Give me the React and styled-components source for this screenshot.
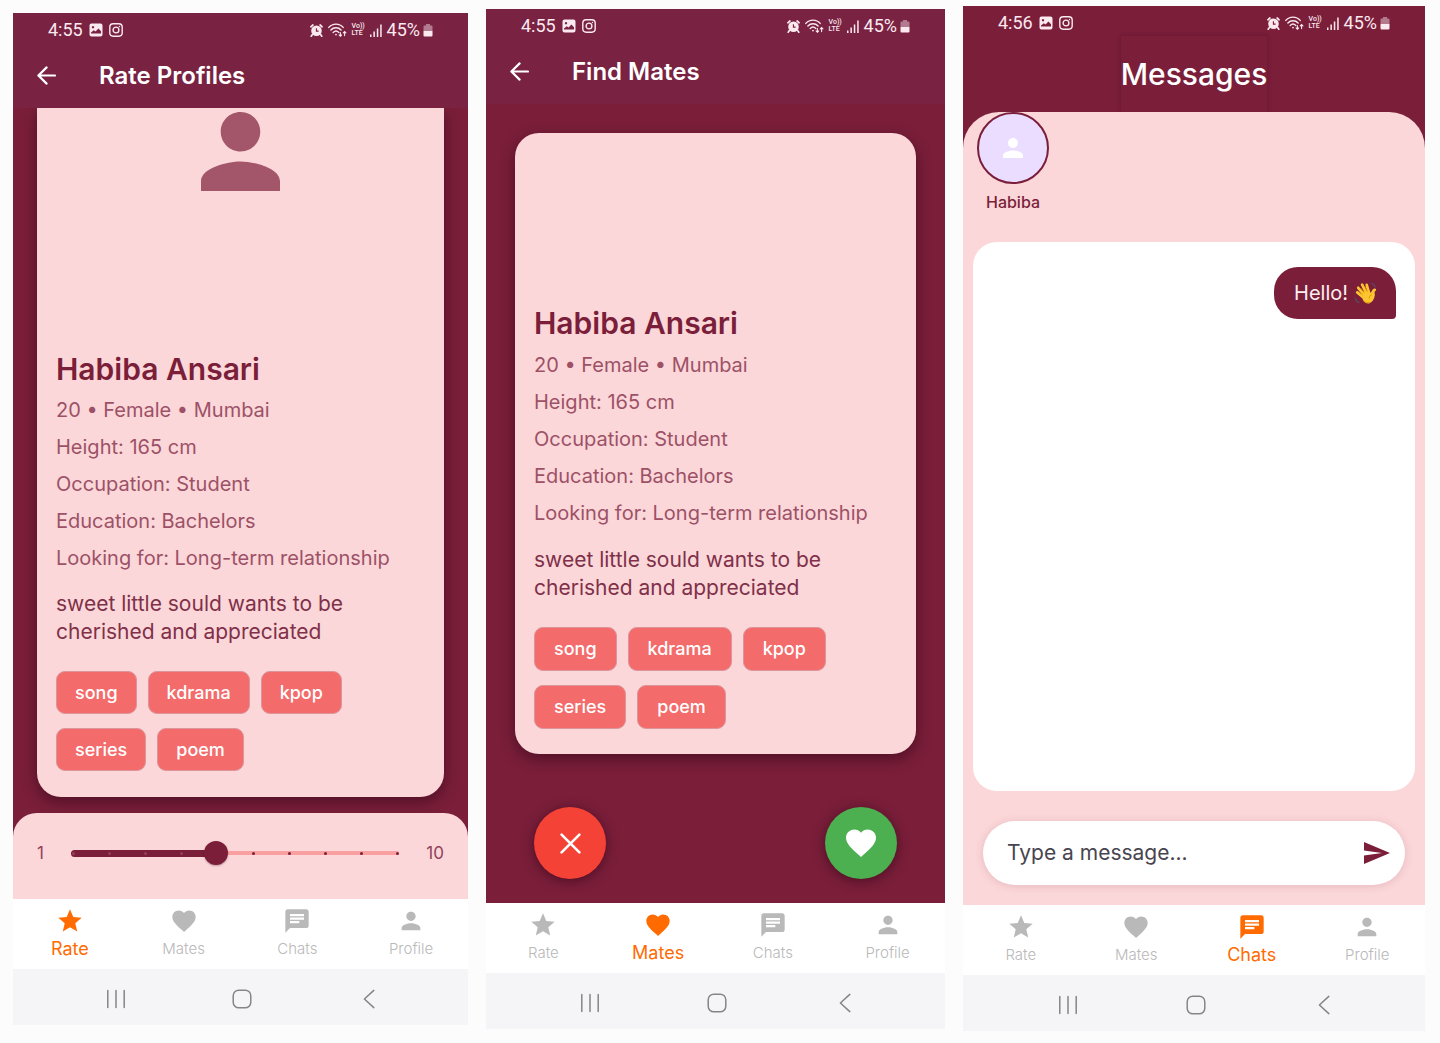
import React, { useState } from "react";
import styled, { createGlobalStyle, css } from "styled-components";

const c = {
  page: "#fcfcfc",
  maroon: "#7a1e3a",
  header: "#792242",
  pink: "#fbd7d9",
  chip: "#f36b6b",
  orange: "#ff6b00",
  grey: "#b9b9b9",
};

const GlobalStyle = createGlobalStyle`
  *, *::before, *::after { box-sizing: border-box; }
  body {
    margin: 0;
    background: ${c.page};
    font-family: Inter, "Noto Sans", sans-serif;
  }
  button, input { font: inherit; }
  button { border: 0; padding: 0; background: none; cursor: pointer; }
  h1, h2, p, ul, dl { margin: 0; padding: 0; }
`;

const Board = styled.main`
  display: grid;
  grid-template-columns: 455fr 459fr 462fr;
  gap: 18px;
  align-items: start;
  padding: 6px 15px 0 13px;
`;

const Phone = styled.section`
  display: flex;
  flex-direction: column;
  min-width: 0;
  margin-top: ${(p) => p.$drop || 0}px;
  background: ${c.maroon};
`;

/* Status bar */

const StatusRow = styled.div`
  display: flex;
  align-items: center;
  justify-content: space-between;
  height: 30px;
  padding: 4px 35px 0;
  color: #fbe9f0;
  font-family: Roboto, sans-serif;
  font-size: 18px;
  line-height: 26px;
`;

const StatusGroup = styled.div`
  display: flex;
  align-items: center;
  gap: ${(p) => (p.$tight ? 5 : 6)}px;
`;

const VoLte = styled.span`
  display: grid;
  width: 13px;
  font-size: 7px;
  font-weight: 500;
  line-height: 7px;
`;

const Charge = styled.span`
  display: flex;
  align-items: center;
  gap: 3px;
`;

function StatusBar({ time }) {
  return (
    <StatusRow>
      <StatusGroup>
        <span>{time}</span>
        <svg width="14" height="14" viewBox="0 0 14 14" aria-hidden="true">
          <path
            fill="currentColor"
            fillRule="evenodd"
            d="M2.5 0.5h9a2 2 0 0 1 2 2v9a2 2 0 0 1-2 2h-9a2 2 0 0 1-2-2v-9a2 2 0 0 1 2-2zM2 10.5h10V8.2L9.4 5.6 6.6 8.6 4.8 7.2 2 9.4zM4 3a1.2 1.2 0 1 0 0.01 0z"
          />
        </svg>
        <svg width="14" height="14" viewBox="0 0 14 14" fill="none" stroke="currentColor" strokeWidth="1.4" aria-hidden="true">
          <rect x="0.8" y="0.8" width="12.4" height="12.4" rx="3.4" />
          <circle cx="7" cy="7" r="2.9" />
          <circle cx="10.5" cy="3.5" r="0.7" fill="currentColor" stroke="none" />
        </svg>
      </StatusGroup>
      <StatusGroup $tight>
        <svg width="13" height="13" viewBox="0 0 13 13" fill="none" aria-hidden="true">
          <circle cx="6.5" cy="6.7" r="5.3" fill="currentColor" />
          <path d="M0.9 2.8L2.9 1M12.1 2.8L10.1 1M2.4 10.6L1.2 12.2M10.6 10.6l1.2 1.6" stroke="currentColor" strokeWidth="1.7" strokeLinecap="round" />
          <path d="M6.4 4.2v2.9h2.2" stroke={c.maroon} strokeWidth="1.1" />
        </svg>
        <svg width="19" height="14" viewBox="0 0 19 14" fill="none" stroke="currentColor" strokeWidth="1.4" strokeLinecap="round" aria-hidden="true">
          <path d="M0.8 4.4C4.6 0 11.4 0 15.2 4.4M2.9 7C5.6 4 10.4 4 13.1 7M5.2 9.4C6.8 7.8 9.2 7.8 10.8 9.4" />
          <circle cx="8" cy="11.6" r="0.9" fill="currentColor" stroke="none" />
          <path d="M12.4 9.6v3.4M11.2 12l1.2 1.2 1.2-1.2M16.6 12.6V8.6M15.3 9.9l1.3-1.4 1.3 1.4" strokeWidth="1.1" />
        </svg>
        <VoLte>
          <span>Vo))</span>
          <span>LTE</span>
        </VoLte>
        <svg width="12" height="13" viewBox="0 0 12 13" fill="currentColor" aria-hidden="true">
          <path d="M0 10.5h1.5V13H0zM3.4 7.5h1.5V13H3.4zM6.8 4.5h1.5V13H6.8zM10.2 0.5h1.5V13h-1.5z" />
        </svg>
        <Charge>
          <span>45%</span>
          <svg width="10" height="13" viewBox="0 0 10 13" fill="currentColor" aria-hidden="true">
            <path opacity="0.45" d="M3 0h4v1.4h1.4A1 1 0 0 1 9.5 2.5V7h-9V2.5a1 1 0 0 1 1.1-1.1H3z" />
            <path d="M0.5 7h9v4.4a1.1 1.1 0 0 1-1.1 1.1H1.6a1.1 1.1 0 0 1-1.1-1.1z" />
          </svg>
        </Charge>
      </StatusGroup>
    </StatusRow>
  );
}

/* App header */

const Header = styled.header`
  background: ${c.header};
`;

const AppBar = styled.div`
  display: flex;
  align-items: center;
  gap: 43px;
  height: 65px;
  padding: 0 24px;
`;

const BackButton = styled.button`
  display: flex;
  color: #fff;
`;

const Title = styled.h1`
  color: #fff;
  font-size: 24px;
  font-weight: 600;
  line-height: 32px;
`;

function TopBar({ time, title }) {
  return (
    <Header>
      <StatusBar time={time} />
      <AppBar>
        <BackButton aria-label="Back">
          <svg width="19" height="19" viewBox="0 0 19 19" fill="none" stroke="currentColor" strokeWidth="2.2" strokeLinecap="round" strokeLinejoin="round">
            <path d="M18 9.5H1.6M9.6 1.4L1.4 9.5l8.2 8.1" />
          </svg>
        </BackButton>
        <Title>{title}</Title>
      </AppBar>
    </Header>
  );
}

/* Profile card */

const Card = styled.article`
  padding: 0 19px ${(p) => (p.$roomy ? 25 : 26)}px;
  background: ${c.pink};
  border-radius: ${(p) => (p.$scrolled ? "0 0 24px 24px" : "24px")};
  box-shadow: 0 5px 14px rgba(40, 4, 18, 0.5);
`;

const Hero = styled.div`
  display: flex;
  justify-content: center;
  height: ${(p) => p.$height}px;
  padding-top: 4px;
`;

const Name = styled.h2`
  color: ${c.maroon};
  font-size: 30px;
  font-weight: 600;
  line-height: 42px;
`;

const Facts = styled.div`
  padding: ${(p) => (p.$roomy ? "3px 0 14px" : "2px 0 13px")};
`;

const Fact = styled.p`
  color: #9d5167;
  font-size: 20px;
  line-height: 37px;
  white-space: nowrap;
`;

const Bio = styled.p`
  max-width: 310px;
  color: #803049;
  font-size: 21px;
  line-height: 28px;
`;

const Chips = styled.ul`
  display: flex;
  flex-wrap: wrap;
  gap: 14px 11px;
  max-width: 320px;
  padding-top: 25px;
  list-style: none;
`;

const Chip = styled.li`
  padding: 0 ${(p) => (p.$roomy ? 19 : 18)}px;
  border: 1px solid #dc959b;
  border-radius: 9px;
  background: ${c.chip};
  color: #fff;
  font-size: 18px;
  font-weight: 500;
  line-height: ${(p) => (p.$roomy ? 42 : 41)}px;
`;

const facts = [
  "20 • Female • Mumbai",
  "Height: 165 cm",
  "Occupation: Student",
  "Education: Bachelors",
  "Looking for: Long-term relationship",
];
const interests = ["song", "kdrama", "kpop", "series", "poem"];

function Profile({ scrolled, roomy, heroHeight, children }) {
  return (
    <Card $scrolled={scrolled} $roomy={roomy}>
      <Hero $height={heroHeight}>{children}</Hero>
      <Name>Habiba Ansari</Name>
      <Facts $roomy={roomy}>
        {facts.map((f) => (
          <Fact key={f}>{f}</Fact>
        ))}
      </Facts>
      <Bio>sweet little sould wants to be cherished and appreciated</Bio>
      <Chips>
        {interests.map((i) => (
          <Chip key={i} $roomy={roomy}>
            {i}
          </Chip>
        ))}
      </Chips>
    </Card>
  );
}

/* Rating slider */

const RateBody = styled.div`
  overflow: hidden;
  padding: 0 24px 16px;
`;

const RatePanel = styled.div`
  display: grid;
  grid-template-columns: 18px 1fr 29px;
  align-items: center;
  height: 86px;
  padding: 0 24px 6px;
  border-radius: 24px 24px 0 0;
  background: ${c.pink};
  color: #93405a;
  font-size: 17px;
  line-height: 24px;
`;

const MaxLabel = styled.span`
  text-align: right;
`;

const Slider = styled.div`
  display: grid;
  align-items: center;

  > * {
    grid-area: 1 / 1;
  }
`;

const Rail = styled.span`
  height: 4px;
  margin: 0 16px;
  border-radius: 2px;
  background: #f99f9f;
`;

const Fill = styled.span`
  height: 7px;
  margin-left: 16px;
  border-radius: 4px;
  background: ${c.maroon};
`;

const Ticks = styled.span`
  display: flex;
`;

const Tick = styled.span`
  display: flex;
  flex: 1;
  justify-content: center;

  &::before {
    content: "";
    width: 3px;
    height: 3px;
    border-radius: 50%;
    background: ${(p) => (p.$passed ? "#95405a" : c.maroon)};
  }
`;

const Range = styled.input`
  appearance: none;
  width: 100%;
  height: 24px;
  margin: 0;
  background: transparent;

  &::-webkit-slider-thumb {
    appearance: none;
    width: 24px;
    height: 24px;
    border-radius: 50%;
    background: ${c.maroon};
    box-shadow: 0 1px 2px rgba(60, 10, 30, 0.3);
  }
`;

function Rating() {
  const [value, setValue] = useState(5);
  return (
    <RatePanel>
      <span>1</span>
      <Slider>
        <Rail />
        <Fill style={{ width: `${((value - 1) / 9) * 90}%` }} />
        <Ticks>
          {Array.from({ length: 10 }, (_, i) => (
            <Tick key={i} $passed={i < value} />
          ))}
        </Ticks>
        <Range
          type="range"
          min="1"
          max="10"
          value={value}
          aria-label="Rating"
          onChange={(e) => setValue(Number(e.target.value))}
        />
      </Slider>
      <MaxLabel>10</MaxLabel>
    </RatePanel>
  );
}

/* Mates */

const MatesBody = styled.div`
  padding: 29px 29px 24px;
`;

const Actions = styled.div`
  display: flex;
  justify-content: space-between;
  padding: 53px 19px 0;
`;

const RoundButton = styled.button`
  display: flex;
  align-items: center;
  justify-content: center;
  width: 72px;
  height: 72px;
  border-radius: 50%;
  background: ${(p) => p.$color};
  color: #fff;
  box-shadow: 0 2px 12px rgba(40, 4, 18, 0.55);
`;

/* Messages */

const MessagesHead = styled.header`
  display: flex;
  justify-content: center;
`;

const MessagesTitle = styled.h1`
  color: #fff;
  font-size: 30px;
  font-weight: 500;
  line-height: 76px;
  box-shadow: 0 0 4px rgba(60, 8, 26, 0.35);
`;

const ChatBody = styled.div`
  position: relative;
  padding: 0 10px 20px;
  border-radius: 36px 36px 0 0;
  background: ${c.pink};
`;

const Contacts = styled.div`
  display: flex;
  height: 130px;
  padding-left: 4px;
`;

const Contact = styled.button`
  display: flex;
  flex-direction: column;
  align-items: center;
  gap: 6px;
  width: 72px;
  height: 102px;
  color: ${c.maroon};
  font-size: 16px;
  font-weight: 500;
  line-height: 24px;
`;

const Avatar = styled.span`
  display: flex;
  align-items: center;
  justify-content: center;
  width: 72px;
  height: 72px;
  border: 2px solid ${c.maroon};
  border-radius: 50%;
  background: #eaddff;
  color: #fff;
`;

const Thread = styled.div`
  display: flex;
  justify-content: flex-end;
  align-items: flex-start;
  height: 549px;
  padding: 25px 19px;
  border-radius: 24px;
  background: #fff;
`;

const Bubble = styled.p`
  display: flex;
  align-items: center;
  gap: 6px;
  height: 52px;
  padding: 0 18px 0 20px;
  border-radius: 24px 24px 4px 24px;
  background: ${c.maroon};
  color: #fdeef2;
  font-size: 20px;
`;

const Composer = styled.form`
  display: flex;
  align-items: center;
  height: 64px;
  margin: 30px 10px 0;
  padding: 0 15px 0 24px;
  border-radius: 32px;
  background: #fff;
  box-shadow: 0 1px 8px rgba(120, 30, 58, 0.16);
`;

const MessageInput = styled.input`
  flex: 1;
  min-width: 0;
  padding: 0;
  border: 0;
  outline: 0;
  background: transparent;
  color: #49454f;
  font-size: 21px;
  line-height: 28px;

  &::placeholder {
    color: #49454f;
    opacity: 1;
  }
`;

const SendButton = styled.button`
  display: flex;
  color: ${c.maroon};
`;

const Wave = () => (
  <svg width="24" height="24" viewBox="0 0 24 24" role="img" aria-label="Waving hand">
    <path d="M17.8 2.4q2.6.8 3.2 3.4M1.4 17.6q.6 3 3.4 3.8" fill="none" stroke="#5d4a63" strokeWidth="1.4" strokeLinecap="round" />
    <g fill="none" stroke="#fdc52f" strokeWidth="2.7" strokeLinecap="round">
      <path d="M8.4 15.6L3.2 11.4M9.6 13.2L4.2 6.8M12 11.4L8.1 3.6M14.8 11.2L12.7 3.8M17.4 15.2q.9-5 3.4-6.4" />
    </g>
    <path d="M6.2 13.6L9.4 10.6 15.6 9.8l2.2 4 2.6-3.4q1 3.4-.2 6.6-1.4 4-4.4 5.2-3.2 1-5.8-1.4z" fill="#fdc52f" />
    <path d="M8.6 13.9L5.8 11.4M10.4 11.7L7.2 7.6M13.3 10.4L11.2 6M17.6 13.6q-2.6 1-2.6 3.6M10 20.4q2.6 2.2 5.6 1" fill="none" stroke="#e08f00" strokeWidth="0.8" strokeLinecap="round" />
  </svg>
);

/* Bottom navigation */

const Tabs = styled.nav`
  display: grid;
  grid-template-columns: repeat(4, 1fr);
  height: 70px;
  padding-top: 8px;
  background: #fff;
`;

const Tab = styled.a`
  display: flex;
  flex-direction: column;
  align-items: center;
  gap: 2px;
  color: ${c.grey};
  font-size: 15px;
  font-weight: 300;
  line-height: 24px;
  text-decoration: none;

  ${(p) =>
    p.$active &&
    css`
      color: ${c.orange};
      font-size: 18px;
      font-weight: 400;
    `}
`;

const SystemBar = styled.div`
  display: grid;
  grid-template-columns: repeat(3, 28%);
  justify-content: center;
  height: 56px;
  padding: 4px 0 0 4px;
  background: #f5f5f7;
`;

const SystemButton = styled.button`
  display: flex;
  align-items: center;
  justify-content: center;
  color: #858587;
`;

const paths = {
  Rate: "M12 17.27L18.18 21l-1.64-7.03L22 9.24l-7.19-.61L12 2 9.19 8.63 2 9.24l5.46 4.73L5.82 21z",
  Mates:
    "M12 21.35l-1.45-1.32C5.4 15.36 2 12.28 2 8.5 2 5.42 4.42 3 7.5 3c1.74 0 3.41.81 4.5 2.09C13.09 3.81 14.76 3 16.5 3 19.58 3 22 5.42 22 8.5c0 3.78-3.4 6.86-8.55 11.54L12 21.35z",
  Chats:
    "M20 2H4c-1.1 0-1.99.9-1.99 2L2 22l4-4h14c1.1 0 2-.9 2-2V4c0-1.1-.9-2-2-2zM6 9h12v2H6V9zm8 5H6v-2h8v2zm4-6H6V6h12v2z",
  Profile:
    "M12 12c2.21 0 4-1.79 4-4s-1.79-4-4-4-4 1.79-4 4 1.79 4 4 4zm0 2c-2.67 0-8 1.34-8 4v2h16v-2c0-2.66-5.33-4-8-4z",
};

const Icon = ({ name, size = 28, viewBox = "0 0 24 24", color = "currentColor" }) => (
  <svg width={size} height={size} viewBox={viewBox} fill={color} aria-hidden="true">
    <path d={paths[name]} />
  </svg>
);

function Footer({ active }) {
  return (
    <footer>
      <Tabs aria-label="Main">
        {Object.keys(paths).map((name) => (
          <Tab key={name} href={`#${name.toLowerCase()}`} $active={name === active}>
            <Icon name={name} />
            <span>{name}</span>
          </Tab>
        ))}
      </Tabs>
      <SystemBar>
        <SystemButton aria-label="Recent apps">
          <svg width="20" height="20" viewBox="0 0 20 20" stroke="currentColor" strokeWidth="1.5" strokeLinecap="round">
            <path d="M1.8 1.5v17M10 1.5v17M18.2 1.5v17" />
          </svg>
        </SystemButton>
        <SystemButton aria-label="Home">
          <svg width="20" height="20" viewBox="0 0 20 20" fill="none" stroke="currentColor" strokeWidth="1.5">
            <rect x="1.2" y="1.2" width="17.6" height="17.6" rx="5.6" />
          </svg>
        </SystemButton>
        <SystemButton aria-label="Back">
          <svg width="20" height="20" viewBox="0 0 20 20" fill="none" stroke="currentColor" strokeWidth="1.5" strokeLinecap="round" strokeLinejoin="round">
            <path d="M14.8 1.4L5.4 10l9.4 8.6" />
          </svg>
        </SystemButton>
      </SystemBar>
    </footer>
  );
}

export default function App() {
  return (
    <>
      <GlobalStyle />
      <Board>
        <Phone $drop={7}>
          <TopBar time="4:55" title="Rate Profiles" />
          <RateBody>
            <Profile scrolled heroHeight={240}>
              <Icon name="Profile" size={79} viewBox="4 4 16 16" color="#a3556a" />
            </Profile>
          </RateBody>
          <Rating />
          <Footer active="Rate" />
        </Phone>

        <Phone $drop={3}>
          <TopBar time="4:55" title="Find Mates" />
          <MatesBody>
            <Profile roomy heroHeight={169} />
            <Actions>
              <RoundButton $color="#f44336" aria-label="Pass">
                <svg width="21" height="21" viewBox="0 0 21 21" stroke="currentColor" strokeWidth="2.6" strokeLinecap="round">
                  <path d="M1.6 1.6l17.8 17.8M19.4 1.6L1.6 19.4" />
                </svg>
              </RoundButton>
              <RoundButton $color="#4caf50" aria-label="Like">
                <Icon name="Mates" size={36} />
              </RoundButton>
            </Actions>
          </MatesBody>
          <Footer active="Mates" />
        </Phone>

        <Phone>
          <StatusBar time="4:56" />
          <MessagesHead>
            <MessagesTitle>Messages</MessagesTitle>
          </MessagesHead>
          <ChatBody>
            <Contacts>
              <Contact>
                <Avatar>
                  <Icon name="Profile" size={30} />
                </Avatar>
                <span>Habiba</span>
              </Contact>
            </Contacts>
            <Thread>
              <Bubble>
                Hello!
                <Wave />
              </Bubble>
            </Thread>
            <Composer onSubmit={(e) => e.preventDefault()}>
              <MessageInput type="text" aria-label="Message" placeholder="Type a message..." />
              <SendButton type="submit" aria-label="Send">
                <svg width="26" height="22" viewBox="0 0 26 22" fill="currentColor">
                  <path d="M0 0L26 11 0 22V13.4L18 11 0 8.6z" />
                </svg>
              </SendButton>
            </Composer>
          </ChatBody>
          <Footer active="Chats" />
        </Phone>
      </Board>
    </>
  );
}
